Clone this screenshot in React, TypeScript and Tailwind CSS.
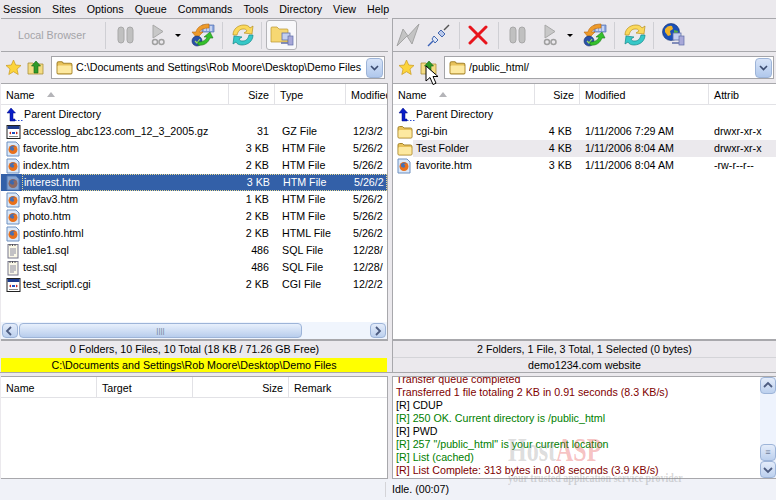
const font = "font-['Liberation_Sans',Arial,sans-serif]"

type Row = { icon: string; name: string; size: string; type: string; date: string; selected?: boolean }

const LOCAL: Row[] = [
  { icon: 'gz', name: 'accesslog_abc123.com_12_3_2005.gz', size: '31', type: 'GZ File', date: '12/3/2' },
  { icon: 'htm', name: 'favorite.htm', size: '3 KB', type: 'HTM File', date: '5/26/2' },
  { icon: 'htm', name: 'index.htm', size: '2 KB', type: 'HTM File', date: '5/26/2' },
  { icon: 'htm', name: 'interest.htm', size: '3 KB', type: 'HTM File', date: '5/26/2', selected: true },
  { icon: 'htm', name: 'myfav3.htm', size: '1 KB', type: 'HTM File', date: '5/26/2' },
  { icon: 'htm', name: 'photo.htm', size: '2 KB', type: 'HTM File', date: '5/26/2' },
  { icon: 'htm', name: 'postinfo.html', size: '2 KB', type: 'HTML File', date: '5/26/2' },
  { icon: 'sql', name: 'table1.sql', size: '486', type: 'SQL File', date: '12/28/' },
  { icon: 'sql', name: 'test.sql', size: '486', type: 'SQL File', date: '12/28/' },
  { icon: 'gz', name: 'test_scriptl.cgi', size: '2 KB', type: 'CGI File', date: '12/2/2' },
]

const REMOTE = [
  { icon: 'folder', name: 'cgi-bin', size: '4 KB', date: '1/11/2006 7:29 AM', attr: 'drwxr-xr-x' },
  { icon: 'folder', name: 'Test Folder', size: '4 KB', date: '1/11/2006 8:04 AM', attr: 'drwxr-xr-x', hover: true },
  { icon: 'htm', name: 'favorite.htm', size: '3 KB', date: '1/11/2006 8:04 AM', attr: '-rw-r--r--' },
]

const LOG = [
  { c: 'text-[#800000]', t: 'Transfer queue completed' },
  { c: 'text-[#800000]', t: 'Transferred 1 file totaling 2 KB in 0.91 seconds (8.3 KB/s)' },
  { c: 'text-black', t: '[R] CDUP' },
  { c: 'text-[#008000]', t: '[R] 250 OK. Current directory is /public_html' },
  { c: 'text-black', t: '[R] PWD' },
  { c: 'text-[#008000]', t: '[R] 257 "/public_html" is your current location' },
  { c: 'text-[#008000]', t: '[R] List (cached)' },
  { c: 'text-[#800000]', t: '[R] List Complete: 313 bytes in 0.08 seconds (3.9 KB/s)' },
]

function FolderIcon({ size = 16 }: { size?: number }) {
  return (
    <svg width={size} height={size} viewBox="0 0 16 16" className="shrink-0">
      <path d="M1 13V4q0-1.500 1.500-1.500h3L7 4h6.500Q15 4 15 5.500V13q0 1-1 1H2q-1 0-1-1z" fill="#e8c25a" stroke="#a5842c" />
      <path d="M1.500 7q0-1 1-1h11q1 0 1 1v6q0 .5-.5.5H2q-.5 0-.5-.5z" fill="#fde9a0" />
    </svg>
  )
}

function HtmIcon({ dim }: { dim?: boolean }) {
  return (
    <svg width="14" height="16" viewBox="0 0 14 16" className={dim ? 'shrink-0 opacity-50' : 'shrink-0'}>
      <path d="M1 1h9l3 3v11H1z" fill="#dbe8f8" stroke="#6d8fc0" />
      <circle cx="7" cy="8.500" r="4.500" fill="#e8701c" />
      <path d="M4 6q3-3 6 0-2-1-3 .5 2 1 .5 3-2 .5-3.500-1z" fill="#4a6fb0" />
    </svg>
  )
}

function SqlIcon() {
  return (
    <svg width="14" height="16" viewBox="0 0 14 16" className="shrink-0">
      <rect x="2" y="1.500" width="10" height="13.500" fill="#fbf8e8" stroke="#77778c" />
      <path d="M4 1v2M6.500 1v2M9 1v2" stroke="#555" />
      <path d="M4 6h6M4 8h6M4 10h6M4 12h4" stroke="#8a8aa0" />
    </svg>
  )
}

function WinIcon() {
  return (
    <svg width="15" height="16" viewBox="0 0 15 16" className="shrink-0">
      <rect x="1" y="1.500" width="13" height="13" fill="#fff" stroke="#222" />
      <rect x="1.500" y="2" width="12" height="3" fill="#1d3b8c" />
      <path d="M3 9l2-1.500v3zM12 9l-2-1.500v3z" fill="#c02020" />
      <rect x="6" y="8" width="3" height="2" fill="#2050c0" />
      <path d="M3 12.500h9" stroke="#888" />
    </svg>
  )
}

function ParentIcon() {
  return (
    <svg width="17" height="16" viewBox="0 0 17 16" className="shrink-0">
      <path d="M5 1l4.500 5H7v6h2v2H4V6H1z" fill="#0a1ec8" stroke="#000a80" strokeWidth=".5" />
      <path d="M9 13.500h1.500M12 13.500h1.500M15 13.500h1.500" stroke="#3050d0" />
    </svg>
  )
}

function RowIcon({ icon, dim }: { icon: string; dim?: boolean }) {
  if (icon === 'htm') return <HtmIcon dim={dim} />
  if (icon === 'sql') return <SqlIcon />
  if (icon === 'folder') return <FolderIcon />
  return <WinIcon />
}

function Star() {
  return (
    <svg width="17" height="17" viewBox="0 0 17 17" className="shrink-0">
      <path d="M8.500 1l2.200 5 5.300.5-4 3.600 1.200 5.400-4.700-2.800-4.700 2.800 1.200-5.400-4-3.600 5.300-.5z" fill="#fcd43c" stroke="#c89a20" strokeWidth=".7" />
    </svg>
  )
}

function UpFolder() {
  return (
    <svg width="18" height="18" viewBox="0 0 18 18" className="shrink-0">
      <path d="M1 15V4h5l1 1h9v10z" fill="#f4dc84" stroke="#a98f3a" strokeWidth=".8" />
      <path d="M9 2l4.500 5H11v7H7V7H4.500z" fill="#2f9a2a" stroke="#16641a" strokeWidth=".6" />
    </svg>
  )
}

function Pause() {
  return (
    <svg width="17" height="20" viewBox="0 0 17 20" className="shrink-0">
      <rect x="1" y="2" width="6" height="16" rx="3" fill="#c0c0c0" stroke="#a8a8a8" />
      <rect x="10" y="2" width="6" height="16" rx="3" fill="#c0c0c0" stroke="#a8a8a8" />
    </svg>
  )
}

function Go() {
  return (
    <svg width="15" height="22" viewBox="0 0 15 22" className="shrink-0">
      <path d="M2 1l10 6.500L2 14z" fill="#c8c8c8" stroke="#a8a8a8" />
      <circle cx="4" cy="18" r="2.500" fill="none" stroke="#a0a0a0" strokeWidth="1.500" />
      <circle cx="10.500" cy="18" r="2.500" fill="none" stroke="#a0a0a0" strokeWidth="1.500" />
    </svg>
  )
}

function Caret() {
  return <span className="block w-0 h-0 shrink-0 border-l-[3px] border-r-[3px] border-t-[3px] border-l-transparent border-r-transparent border-t-black" />
}

function Sep({ ml }: { ml: string }) {
  return <span className={`w-px h-[27px] bg-[#cfcfd4] shrink-0 ${ml}`} />
}

function TransferIcon() {
  return (
    <svg width="24" height="26" viewBox="0 0 24 26" className="shrink-0">
      <path d="M11 3h12v7H11z" fill="#8fa8e0" stroke="#5070b0" strokeWidth=".7" />
      <path d="M14 4v5M17 4v5M20 4v5" stroke="#fff" />
      <path d="M18 2C11 2 6 5 5 10H1l5 6 6-6H8.500C10 7 13 6 18 6z" fill="#ee9a2a" stroke="#b86a10" strokeWidth=".6" />
      <circle cx="6" cy="19" r="5" fill="#2a50a8" stroke="#12306a" strokeWidth=".6" />
      <path d="M4 19l2 2 3-4" stroke="#9be060" strokeWidth="1.200" fill="none" />
      <path d="M7 23c6 1 10-2 12-7h3l-3-6-6 5h3c-1 3-4 5-9 5z" fill="#34c02c" stroke="#1a7a18" strokeWidth=".6" />
    </svg>
  )
}

function RefreshIcon() {
  return (
    <svg width="24" height="24" viewBox="0 0 24 24" className="shrink-0">
      <path d="M2 12C2 6 7 2 13 2c3 0 5 1 6 3l3-2-1 8-8-1 3-2c-1-2-2-2-4-2-3 0-5 2-6 6z" fill="#fbd95c" stroke="#b89020" strokeWidth=".7" />
      <path d="M22 12c0 6-5 10-11 10-3 0-5-1-6-3l-3 2 1-8 8 1-3 2c1 2 2 2 4 2 3 0 5-2 6-6z" fill="#36c8c8" stroke="#148888" strokeWidth=".7" />
    </svg>
  )
}

function SiteIcon({ globe }: { globe?: boolean }) {
  return (
    <svg width="24" height="24" viewBox="0 0 24 24" className="shrink-0">
      {globe ? (
        <>
          <circle cx="10" cy="9" r="8.500" fill="#1a50b8" stroke="#0c2c70" strokeWidth=".6" />
          <path d="M4 6q3-4 7-3l1 3-3 2 1 4-3 1-3-4z" fill="#f0b428" />
          <path d="M13 7l4 1-1 4-3-1z" fill="#58b040" />
        </>
      ) : (
        <path d="M1 19V5q0-1 1-1h5l2 2h8q1 0 1 1v12z" fill="#f6d772" stroke="#b9952f" strokeWidth=".7" />
      )}
      <rect x="12" y="10" width="8" height="7" fill="#c4d0f0" stroke="#5f6ea8" strokeWidth=".8" />
      <rect x="18" y="13" width="5" height="9" fill="#a8a8d8" stroke="#5f6ea8" strokeWidth=".7" />
      <path d="M11 20h7" stroke="#5f6ea8" strokeWidth="1.500" />
    </svg>
  )
}

function Bolt() {
  return (
    <svg width="24" height="24" viewBox="0 0 24 24" className="shrink-0">
      <path d="M1 23L7 6l5 7L23 1 16 21l-5-8z" fill="#c4c4c4" stroke="#a4a4a4" />
    </svg>
  )
}

function Plug() {
  return (
    <svg width="24" height="24" viewBox="0 0 24 24" className="shrink-0 ml-[7px]">
      <path d="M1 23l5-5" stroke="#3a62b8" strokeWidth="1.500" />
      <path d="M7 13l4 4-3 3-3-4z" fill="#dfe8f8" stroke="#4468b0" />
      <path d="M11 10l4 4 3-3-4-4z" fill="#b9c8ea" stroke="#4468b0" />
      <path d="M17 7l5-5" stroke="#555" strokeWidth="1.500" />
    </svg>
  )
}

function RedX() {
  return (
    <svg width="20" height="20" viewBox="0 0 20 20" className="shrink-0 ml-[8px]">
      <path d="M2 2l16 16M18 2L2 18" stroke="#e8141c" strokeWidth="3" strokeLinecap="round" />
    </svg>
  )
}

function Cursor() {
  return (
    <svg width="15" height="22" viewBox="0 0 15 22" className="absolute left-[425px] top-[65px]">
      <path d="M1 1v15l4-3.500 3 7 3-1.300-3-6.700h5z" fill="#fff" stroke="#000" />
    </svg>
  )
}

function ComboArrow() {
  return (
    <span className="w-[17px] h-[20px] shrink-0 rounded-sm bg-gradient-to-b from-[#d8e4f8] to-[#b0c8ec] border border-[#9db4d8] flex items-center justify-center">
      <svg width="9" height="6" viewBox="0 0 9 6">
        <path d="M1 1l3.500 3.500L8 1" fill="none" stroke="#3c4c70" strokeWidth="1.600" />
      </svg>
    </span>
  )
}

function Head({ label, w, right, sort, last }: { label: string; w: string; right?: boolean; sort?: boolean; last?: boolean }) {
  return (
    <div className={`${w} h-full flex items-center gap-2 px-[5px] overflow-hidden whitespace-nowrap ${right ? 'justify-end' : ''} ${last ? 'flex-1 min-w-0' : 'shrink-0 border-r border-[#e2e2e6]'}`}>
      <span className="pt-[2px]">{label}</span>
      {sort && <span className="w-0 h-0 ml-1 border-l-[4px] border-r-[4px] border-b-[5px] border-l-transparent border-r-transparent border-b-[#b4b4b8]" />}
    </div>
  )
}

function ScrollBtn({ dir, h = 'h-[15px]' }: { dir: string; h?: string }) {
  const d = dir === 'left' ? 'M6 1L2 5l4 4' : dir === 'right' ? 'M3 1l4 4-4 4' : dir === 'up' ? 'M1 6l4-4 4 4' : 'M1 3l4 4 4-4'
  return (
    <span className={`w-[16px] ${h} shrink-0 rounded-sm border border-[#9db4d8] bg-gradient-to-b from-[#e4ecfa] to-[#bcd0ee] flex items-center justify-center`}>
      <svg width="10" height="10" viewBox="0 0 10 10">
        <path d={d} fill="none" stroke="#4d5c80" strokeWidth="1.800" />
      </svg>
    </span>
  )
}

export default function App() {
  return (
    <div className={`${font} w-[776px] h-[500px] overflow-hidden relative bg-[#f0f2f8] text-[10.7px] leading-[13px] text-black flex flex-col`}>
      {/* Menu */}
      <div className="h-[18px] shrink-0 bg-[#ebe9ed] flex items-center pl-[3px] gap-[11px]">
        {['Session', 'Sites', 'Options', 'Queue', 'Commands', 'Tools', 'Directory', 'View', 'Help'].map(m => (
          <span key={m}>{m}</span>
        ))}
      </div>

      <div className="flex h-[354px] shrink-0 bg-[#ebe9ed]">
        {/* Local pane */}
        <div className="w-[387px] ml-px shrink-0 flex flex-col">
          <div className="h-[34px] shrink-0 border-t border-b border-[#a8a8ac] flex items-center pl-[17px]">
            <span className="text-[#a4a4a8] w-[84px] whitespace-nowrap">Local Browser</span>
            <Sep ml="ml-[3px]" />
            <span className="ml-[11px]"><Pause /></span>
            <span className="ml-[17px]"><Go /></span>
            <span className="ml-[9px]"><Caret /></span>
            <span className="ml-[10px]"><TransferIcon /></span>
            <Sep ml="ml-[7px]" />
            <span className="ml-[8px]"><RefreshIcon /></span>
            <Sep ml="ml-[6px]" />
            <span className="w-[31px] h-[30px] rounded-[3px] border border-[#b4b4b8] bg-[#f8f8fa] flex items-center justify-center ml-[4px]">
              <SiteIcon />
            </span>
          </div>
          <div className="h-[32px] shrink-0 border-b border-[#a8a8ac] flex items-center pl-[4px] pr-[3px] gap-[5px]">
            <Star />
            <UpFolder />
            <div className="flex-1 min-w-0 h-[23px] border border-[#a4a4a8] bg-white flex items-center pl-[4px] pr-px gap-[3px] ml-[1px]">
              <FolderIcon size={17} />
              <span className="flex-1 min-w-0 overflow-hidden whitespace-nowrap">C:\Documents and Settings\Rob Moore\Desktop\Demo Files</span>
              <ComboArrow />
            </div>
          </div>
          <div className="flex-1 min-h-0 flex flex-col bg-white border-r border-[#a8a8ac]">
            <div className="h-[21px] shrink-0 border-b border-[#e2e2e6] flex items-center">
              <Head label="Name" w="w-[228px]" sort />
              <Head label="Size" w="w-[46px]" right />
              <Head label="Type" w="w-[71px]" />
              <Head label="Modified" w="" last />
            </div>
            <div className="flex-1 min-h-0 overflow-hidden pt-px">
              <div className="h-[17px] flex items-center pl-[5px] gap-[1px]">
                <ParentIcon />
                <span>Parent Directory</span>
              </div>
              {LOCAL.map(r => (
                <div key={r.name} className={`h-[17px] flex items-center whitespace-nowrap ${r.selected ? 'bg-[#3360a8] text-white' : ''}`}>
                  <span className="w-[21px] pl-[5px] shrink-0"><RowIcon icon={r.icon} dim={r.selected} /></span>
                  <div className={`flex-1 min-w-0 h-full flex items-center pl-px ${r.selected ? 'border border-dotted border-[#e8d890] pl-0' : ''}`}>
                    <span className="w-[206px] shrink-0">{r.name}</span>
                    <span className="w-[40px] shrink-0 text-right">{r.size}</span>
                    <span className="w-[77px] shrink-0 pl-[13px]">{r.type}</span>
                    <span className="flex-1 min-w-0 overflow-hidden pl-[7px]">{r.date}</span>
                  </div>
                </div>
              ))}
            </div>
            <div className="h-[17px] shrink-0 flex items-center pl-[1px] pr-px bg-[#f0f5fd] border-b-2 border-[#a8a8ac] box-content">
              <ScrollBtn dir="left" />
              <div className="w-[283px] h-[15px] ml-px rounded-sm border border-[#9db4d8] bg-gradient-to-b from-[#e8f0fc] to-[#b8cdec] flex items-center justify-center text-[#70809c] text-[8px]">
                ||||
              </div>
              <div className="flex-1" />
              <ScrollBtn dir="right" />
            </div>
          </div>
          <div className="h-[17px] shrink-0 flex items-center justify-center">0 Folders, 10 Files, 10 Total (18 KB / 71.26 GB Free)</div>
          <div className="h-[14px] shrink-0 flex items-center justify-center bg-[#ffff00] mr-px">C:\Documents and Settings\Rob Moore\Desktop\Demo Files</div>
        </div>

        {/* Right pane */}
        <div className="w-[384px] ml-[4px] shrink-0 flex flex-col border-l border-[#a8a8ac]">
          <div className="h-[34px] shrink-0 border-t border-b border-[#a8a8ac] flex items-center pl-[3px]">
            <Bolt />
            <Plug />
            <Sep ml="ml-[8px]" />
            <RedX />
            <Sep ml="ml-[10px]" />
            <span className="ml-[10px]"><Pause /></span>
            <span className="ml-[17px]"><Go /></span>
            <span className="ml-[9px]"><Caret /></span>
            <span className="ml-[10px]"><TransferIcon /></span>
            <Sep ml="ml-[7px]" />
            <span className="ml-[8px]"><RefreshIcon /></span>
            <Sep ml="ml-[6px]" />
            <span className="ml-[7px]"><SiteIcon globe /></span>
          </div>
          <div className="h-[32px] shrink-0 border-b border-[#a8a8ac] flex items-center pl-[5px] pr-[2px] gap-[5px]">
            <Star />
            <UpFolder />
            <div className="flex-1 min-w-0 h-[23px] border border-[#a4a4a8] bg-white flex items-center pl-[4px] pr-px gap-[3px] ml-[1px]">
              <FolderIcon size={17} />
              <span className="flex-1 min-w-0 overflow-hidden whitespace-nowrap">/public_html/</span>
              <ComboArrow />
            </div>
          </div>
          <div className="flex-1 min-h-0 flex flex-col bg-white border-b-2 border-[#a8a8ac]">
            <div className="h-[21px] shrink-0 border-b border-[#e2e2e6] flex items-center">
              <Head label="Name" w="w-[142px]" sort />
              <Head label="Size" w="w-[45px]" right />
              <Head label="Modified" w="w-[129px]" />
              <Head label="Attrib" w="" last />
            </div>
            <div className="flex-1 min-h-0 overflow-hidden pt-px">
              <div className="h-[17px] flex items-center pl-[5px] gap-[1px]">
                <ParentIcon />
                <span>Parent Directory</span>
              </div>
              {REMOTE.map(r => (
                <div key={r.name} className="h-[17px] flex items-center whitespace-nowrap">
                  <span className="w-[20px] pl-[4px] shrink-0"><RowIcon icon={r.icon} /></span>
                  <div className={`flex-1 min-w-0 h-full flex items-center ${r.hover ? 'bg-[#ebe9ed]' : ''}`}>
                    <span className="w-[122px] shrink-0 pl-[3px]">{r.name}</span>
                    <span className="w-[37px] shrink-0 text-right">{r.size}</span>
                    <span className="w-[129px] shrink-0 pl-[13px]">{r.date}</span>
                    <span className="pl-[13px]">{r.attr}</span>
                  </div>
                </div>
              ))}
            </div>
          </div>
          <div className="h-[16px] shrink-0 flex items-center justify-center">2 Folders, 1 File, 3 Total, 1 Selected (0 bytes)</div>
          <div className="h-[15px] shrink-0 flex items-center justify-center border-t border-[#d4d4d8]">demo1234.com website</div>
        </div>
      </div>

      {/* Queue and log */}
      <div className="h-[107px] shrink-0 flex bg-[#ebe9ed] border-t border-[#a8a8ac]">
        <div className="w-[387px] ml-px mt-[3px] shrink-0 bg-white border-t border-b border-r border-[#a8a8ac] flex flex-col">
          <div className="h-[21px] shrink-0 border-b border-[#e2e2e6] flex items-center">
            <Head label="Name" w="w-[96px]" />
            <Head label="Target" w="w-[96px]" />
            <Head label="Size" w="w-[96px]" right />
            <Head label="Remark" w="" last />
          </div>
        </div>
        <div className="w-[384px] ml-[4px] mt-[3px] shrink-0 bg-white border-t border-b border-l border-[#a8a8ac] flex overflow-hidden">
          <div className="flex-1 min-w-0 pl-[3px] -mt-[4px]">
            {LOG.map(l => (
              <div key={l.t} className={`h-[13px] whitespace-nowrap ${l.c}`}>{l.t}</div>
            ))}
          </div>
          <div className="w-[16px] shrink-0 flex flex-col bg-[#eef3fd]">
            <ScrollBtn dir="up" h="h-[17px]" />
            <div className="flex-1" />
            <span className="h-[17px] w-[16px] rounded-sm border border-[#9db4d8] bg-gradient-to-b from-[#e4ecfa] to-[#bcd0ee] text-[9px] leading-[14px] text-center text-[#70809c]">≡</span>
            <ScrollBtn dir="down" h="h-[17px]" />
          </div>
        </div>
      </div>

      {/* Status bar */}
      <div className="flex-1 flex items-center bg-[#f0f2f8]">
        <span className="w-px h-[15px] ml-[385px] bg-[#d4d4d8]" />
        <span className="ml-[6px]">Idle. (00:07)</span>
      </div>

      {/* Overlays */}
      <Cursor />
      <div className="absolute left-[508px] top-[436px] font-['Liberation_Serif',serif] font-bold text-[24px] leading-[28px] text-[#8a8a8a]/30 pointer-events-none scale-y-[1.4]">
        Host<span className="text-[#e03030]/30">ASP</span>
      </div>
      <div className="absolute left-[508px] top-[471px] font-['Liberation_Serif',serif] font-bold text-[10px] leading-[14px] text-[#8a8a8a]/35 whitespace-nowrap pointer-events-none scale-y-125">
        your trusted application service provider
      </div>
    </div>
  )
}
